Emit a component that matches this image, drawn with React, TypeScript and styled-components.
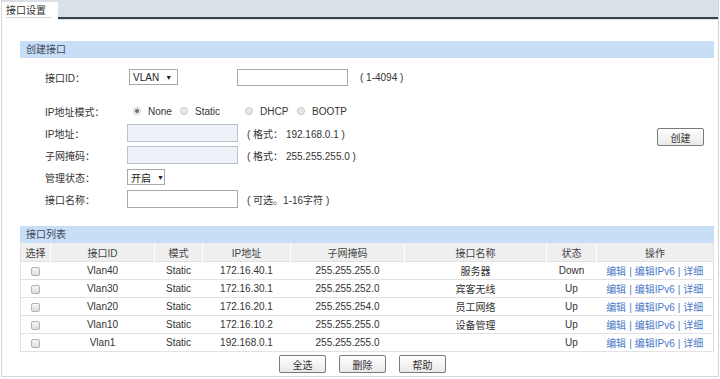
import styled, { createGlobalStyle } from "styled-components";

const GlobalStyle = createGlobalStyle`
  html, body {
    margin: 0;
    padding: 0;
    background: #ffffff;
  }
  body {
    font-family: "Liberation Sans", "Noto Sans CJK SC", sans-serif;
    font-size: 10px;
    color: #333;
  }
`;

const Frame = styled.div`
  width: 718px;
  height: 377px;
  margin-left: 1px;
  border-left: 1px solid #d6d6d6;
  border-right: 1px solid #d6d6d6;
  border-bottom: 1px solid #d6d6d6;
  box-sizing: border-box;
  display: flex;
  flex-direction: column;
`;

const TabBar = styled.div`
  height: 20px;
  background: #d9e0e7;
  display: flex;
  align-items: flex-end;
`;

const Tab = styled.div`
  width: 56px;
  height: 18px;
  background: #fff;
  display: flex;
  align-items: center;
  padding-left: 4px;
  box-sizing: border-box;
`;

const TabLabel = styled.span`
  border-bottom: 1px solid #d8d8d8;
  line-height: 13px;
  padding-right: 6px;
`;

const TabLine = styled.div`
  flex: 1;
  height: 2px;
  margin-bottom: 1px;
  background: #34444c;
`;

const Content = styled.div`
  padding: 21px 4px 0 18px;
  display: flex;
  flex-direction: column;
`;

const SectionHead = styled.div`
  height: 17px;
  line-height: 17px;
  background: #c8ddf6;
  padding-left: 6px;
  color: #3a4a5a;
`;

const Form = styled.div`
  display: flex;
  flex-direction: column;
  padding: 8px 0 0 25px;
`;

const Row = styled.div<{ $gap?: number }>`
  height: 22px;
  display: flex;
  align-items: center;
  margin-top: ${(p) => p.$gap ?? 0}px;
`;

const Label = styled.div`
  width: 82px;
  flex: none;
`;

const Select = styled.div<{ $w: number; $ml?: number }>`
  width: ${(p) => p.$w}px;
  height: 16px;
  margin-left: ${(p) => p.$ml ?? 0}px;
  border: 1px solid #a9a9a9;
  box-sizing: border-box;
  display: flex;
  align-items: center;
  padding-left: 3px;
  gap: 6px;
  white-space: nowrap;
  background: #fff;
  color: #222;
`;

const Caret = styled.span`
  font-size: 7px;
`;

const Input = styled.div<{ $w: number; $h?: number; $ml?: number; $disabled?: boolean }>`
  width: ${(p) => p.$w}px;
  height: ${(p) => p.$h ?? 18}px;
  margin-left: ${(p) => p.$ml ?? 0}px;
  box-sizing: border-box;
  border: 1px solid ${(p) => (p.$disabled ? "#b9c1cd" : "#a9a9a9")};
  background: ${(p) => (p.$disabled ? "#eef1f8" : "#fff")};
`;

const Hint = styled.span<{ $ml: number }>`
  margin-left: ${(p) => p.$ml}px;
  color: #333;
  white-space: pre;
`;

const Radios = styled.div`
  display: flex;
  align-items: center;
  margin-left: 6px;
`;

const RadioItem = styled.label<{ $w: number }>`
  width: ${(p) => p.$w}px;
  display: flex;
  align-items: center;
  gap: 7px;
`;

const Radio = styled.span<{ $on?: boolean }>`
  width: 8px;
  height: 8px;
  border-radius: 50%;
  box-sizing: border-box;
  border: 1px solid #c8c8c8;
  background: ${(p) =>
    p.$on
      ? "radial-gradient(circle, #777 0 1.6px, #f4f4f4 2.2px)"
      : "#e8e8e8"};
`;

const Button = styled.button<{ $w?: number }>`
  width: ${(p) => p.$w ?? 47}px;
  height: 18px;
  padding: 0;
  border: 1px solid #7a7a7a;
  border-radius: 2px;
  background: linear-gradient(#ffffff, #e9e9e9);
  font-family: "Liberation Sans", "Noto Sans CJK SC", sans-serif;
  font-size: 10px;
  color: #333;
`;

const CreateButton = styled(Button)`
  margin-left: auto;
  margin-right: 10px;
  margin-top: 8px;
`;

const ListHead = styled(SectionHead)`
  margin-top: 16px;
`;

const Table = styled.table`
  width: 100%;
  border-collapse: collapse;
  table-layout: fixed;
  border-left: 1px solid #e2e2e2;
  border-right: 1px solid #e2e2e2;
  border-bottom: 1px solid #e2e2e2;
`;

const Th = styled.th`
  height: 18px;
  padding: 0;
  font-weight: normal;
  background: #efefef;
  border-left: 1px solid #fff;
  color: #444;
  &:first-child {
    border-left: none;
  }
`;

const Td = styled.td`
  height: 17px;
  padding: 0;
  text-align: center;
  border-top: 1px solid #e2e2e2;
  color: #333;
  white-space: nowrap;
`;

const Check = styled.span`
  display: inline-block;
  width: 9px;
  height: 9px;
  border: 1px solid #b4b4b4;
  border-radius: 2px;
  background: linear-gradient(#f6f6f6, #dcdcdc);
  box-sizing: border-box;
  vertical-align: middle;
`;

const Link = styled.a`
  color: #4a78c8;
  text-decoration: none;
`;

const Sep = styled.span`
  color: #4a78c8;
  margin: 0 3px;
`;

const Footer = styled.div`
  display: flex;
  justify-content: center;
  gap: 13px;
  padding-top: 3px;
  padding-right: 9px;
`;

const columns = [
  { t: "选择", w: 30 },
  { t: "接口ID", w: 104 },
  { t: "模式", w: 48 },
  { t: "IP地址", w: 88 },
  { t: "子网掩码", w: 114 },
  { t: "接口名称", w: 142 },
  { t: "状态", w: 50 },
  { t: "操作", w: 117 },
];

const rows = [
  { id: "Vlan40", ip: "172.16.40.1", mask: "255.255.255.0", name: "服务器", st: "Down" },
  { id: "Vlan30", ip: "172.16.30.1", mask: "255.255.252.0", name: "宾客无线", st: "Up" },
  { id: "Vlan20", ip: "172.16.20.1", mask: "255.255.254.0", name: "员工网络", st: "Up" },
  { id: "Vlan10", ip: "172.16.10.2", mask: "255.255.255.0", name: "设备管理", st: "Up" },
  { id: "Vlan1", ip: "192.168.0.1", mask: "255.255.255.0", name: "", st: "Up" },
];

const App = () => {
  return (
    <>
      <GlobalStyle />
      <Frame>
        <TabBar>
          <Tab>
            <TabLabel>接口设置</TabLabel>
          </Tab>
          <TabLine />
        </TabBar>
        <Content>
          <SectionHead>创建接口</SectionHead>
          <Form>
            <Row>
              <Label>接口ID：</Label>
              <Select $w={49} $ml={2}>
                VLAN <Caret>▼</Caret>
              </Select>
              <Input $w={111} $h={17} $ml={59} />
              <Hint $ml={12}>( 1-4094 )</Hint>
            </Row>
            <Row $gap={12}>
              <Label>IP地址模式：</Label>
              <Radios>
                <RadioItem $w={47}>
                  <Radio $on />
                  None
                </RadioItem>
                <RadioItem $w={65}>
                  <Radio />
                  Static
                </RadioItem>
                <RadioItem $w={52}>
                  <Radio />
                  DHCP
                </RadioItem>
                <RadioItem $w={60}>
                  <Radio />
                  BOOTP
                </RadioItem>
              </Radios>
            </Row>
            <Row>
              <Label>IP地址：</Label>
              <Input $w={111} $disabled />
              <Hint $ml={9}>( 格式： 192.168.0.1 )</Hint>
              <CreateButton>创建</CreateButton>
            </Row>
            <Row>
              <Label>子网掩码：</Label>
              <Input $w={111} $disabled />
              <Hint $ml={9}>( 格式： 255.255.255.0 )</Hint>
            </Row>
            <Row>
              <Label>管理状态：</Label>
              <Select $w={38}>
                开启 <Caret>▼</Caret>
              </Select>
            </Row>
            <Row>
              <Label>接口名称：</Label>
              <Input $w={111} />
              <Hint $ml={9}>( 可选。1-16字符 )</Hint>
            </Row>
          </Form>
          <ListHead>接口列表</ListHead>
          <Table>
            <colgroup>
              {columns.map((c) => (
                <col key={c.t} style={{ width: c.w }} />
              ))}
            </colgroup>
            <thead>
              <tr>
                {columns.map((c) => (
                  <Th key={c.t}>{c.t}</Th>
                ))}
              </tr>
            </thead>
            <tbody>
              {rows.map((r) => (
                <tr key={r.id}>
                  <Td>
                    <Check />
                  </Td>
                  <Td>{r.id}</Td>
                  <Td>Static</Td>
                  <Td>{r.ip}</Td>
                  <Td>{r.mask}</Td>
                  <Td>{r.name}</Td>
                  <Td>{r.st}</Td>
                  <Td>
                    <Link>编辑</Link>
                    <Sep>|</Sep>
                    <Link>编辑IPv6</Link>
                    <Sep>|</Sep>
                    <Link>详细</Link>
                  </Td>
                </tr>
              ))}
            </tbody>
          </Table>
          <Footer>
            <Button>全选</Button>
            <Button>删除</Button>
            <Button>帮助</Button>
          </Footer>
        </Content>
      </Frame>
    </>
  );
};

export default App;
